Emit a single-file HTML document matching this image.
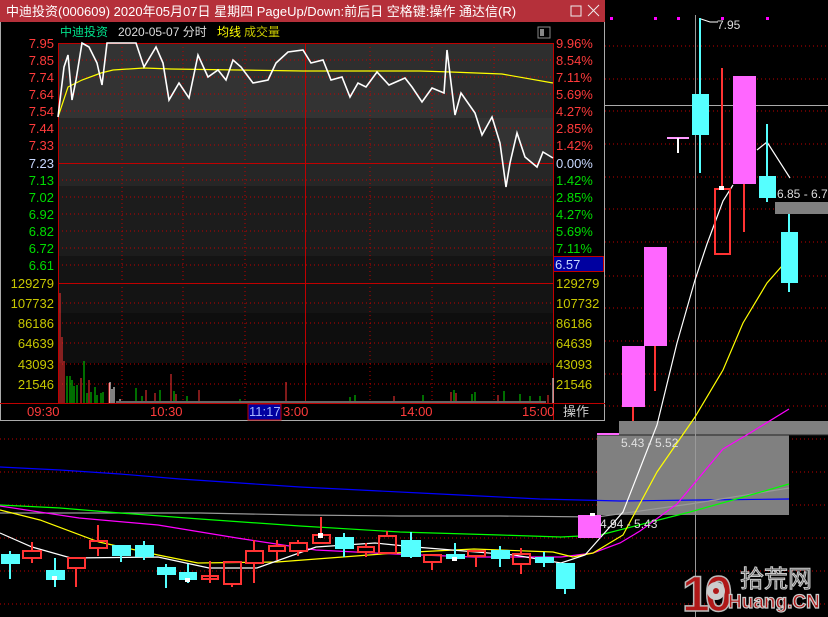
<!DOCTYPE html>
<html><head><meta charset="utf-8"><style>
html,body{margin:0;padding:0;background:#000;width:828px;height:617px;overflow:hidden}
svg{display:block}
text{font-family:"Liberation Sans","Noto Sans CJK SC",sans-serif}
</style></head><body>
<svg width="828" height="617" viewBox="0 0 828 617" xmlns="http://www.w3.org/2000/svg">
<rect width="828" height="617" fill="#000"/>
<g stroke="#c00000" stroke-width="1" stroke-dasharray="1,3">
<line x1="605" y1="46" x2="828" y2="46"/><line x1="605" y1="79" x2="828" y2="79"/><line x1="605" y1="111" x2="828" y2="111"/>
<line x1="605" y1="144" x2="828" y2="144"/><line x1="605" y1="177" x2="828" y2="177"/><line x1="605" y1="209" x2="828" y2="209"/>
<line x1="605" y1="242" x2="828" y2="242"/><line x1="605" y1="276" x2="828" y2="276"/><line x1="605" y1="308" x2="828" y2="308"/>
<line x1="605" y1="341" x2="828" y2="341"/><line x1="605" y1="374" x2="828" y2="374"/><line x1="605" y1="406" x2="828" y2="406"/>
<line x1="0" y1="439" x2="828" y2="439"/><line x1="0" y1="472" x2="828" y2="472"/><line x1="0" y1="505" x2="828" y2="505"/>
<line x1="0" y1="538" x2="828" y2="538"/><line x1="0" y1="571" x2="828" y2="571"/><line x1="0" y1="604" x2="828" y2="604"/>
</g>
<g fill="#ff00ff"><rect x="610" y="17" width="3" height="3"/><rect x="654" y="17" width="3" height="3"/><rect x="677" y="17" width="3" height="3"/><rect x="721" y="17" width="3" height="3"/><rect x="766" y="17" width="3" height="3"/></g>
<rect x="619" y="421" width="209" height="14" fill="#808080"/>
<rect x="597" y="435" width="192" height="80" fill="#808080"/>
<line x1="597" y1="435" x2="828" y2="435" stroke="#222" stroke-width="1"/>
<rect x="775" y="202" width="53" height="12" fill="#808080"/>
<rect x="597" y="433" width="22" height="2" fill="#ff66ff"/>
<line x1="695.5" y1="15" x2="695.5" y2="617" stroke="#999"/>
<line x1="605" y1="105.5" x2="828" y2="105.5" stroke="#aaa"/>
<g fill="none" stroke-width="1.2">
<polyline stroke="#0000ff" points="0,467 60,470 120,474 180,479 240,483 300,487 360,490 420,493 480,496 540,499 620,501 700,500 789,499"/>
<polyline stroke="#999" points="0,513 100,513 200,513 300,515 400,516 500,516 597,517 690,504 789,488"/>
<polyline stroke="#00ff00" points="0,505 60,508 120,513 200,519 300,526 400,532 500,535 561,537 600,535 690,512 740,498 789,484"/>
<polyline stroke="#ff00ff" points="0,506 79,518 158,525 237,538 316,550 395,554 474,557 561,557 593,553 620,543 640,531 677,504 723,449 750,433 789,409"/>
<polyline stroke="#ffff00" points="0,510 40,520 99,542 158,555 198,563 277,562 395,553 474,549 553,552 573,557 593,553 623,535 657,472 695,417 723,370 743,323 767,283 789,258"/>
<polyline stroke="#fff" points="0,533 32,547 71,558 158,557 209,568 257,568 316,547 375,543 415,547 514,555 561,563 585,555 623,512 657,425 677,343 695,280 707,244 723,201 733,185"/>
<polyline stroke="#fff" points="757,150 767,142 790,178"/>
</g>
<g stroke-width="2">
<g stroke="#55ffff" fill="#55ffff">
<line x1="10" y1="551" x2="10" y2="579"/><rect x="2" y="555" width="17" height="8"/>
<line x1="55" y1="558" x2="55" y2="587"/><rect x="47" y="571" width="17" height="8"/>
<line x1="121" y1="546" x2="121" y2="562"/><rect x="113" y="546" width="17" height="9"/>
<line x1="144" y1="541" x2="144" y2="560"/><rect x="136" y="546" width="17" height="10"/>
<line x1="166" y1="564" x2="166" y2="588"/><rect x="158" y="568" width="17" height="6"/>
<line x1="188" y1="564" x2="188" y2="583"/><rect x="180" y="573" width="16" height="6"/>
<line x1="344" y1="533" x2="344" y2="557"/><rect x="336" y="538" width="17" height="10"/>
<line x1="411" y1="532" x2="411" y2="558"/><rect x="402" y="541" width="18" height="15"/>
<line x1="455" y1="543" x2="455" y2="561"/><rect x="447" y="555" width="17" height="3"/>
<line x1="500" y1="546" x2="500" y2="567"/><rect x="492" y="551" width="17" height="7"/>
<line x1="544" y1="552" x2="544" y2="567"/><rect x="536" y="558" width="17" height="4"/>
<line x1="565" y1="564" x2="565" y2="594"/><rect x="557" y="564" width="17" height="24"/>
</g>
<g stroke="#ff3333" fill="none">
<line x1="32" y1="542" x2="32" y2="551"/><line x1="32" y1="558" x2="32" y2="563"/><rect x="23" y="551" width="18" height="7"/>
<line x1="76" y1="568" x2="76" y2="587"/><rect x="68" y="558" width="17" height="10"/>
<line x1="98" y1="525" x2="98" y2="541"/><line x1="98" y1="548" x2="98" y2="556"/><rect x="90" y="541" width="17" height="7"/>
<line x1="210" y1="561" x2="210" y2="583"/><rect x="202" y="576" width="16" height="3"/>
<line x1="232" y1="584" x2="232" y2="587"/><rect x="224" y="562" width="17" height="22"/>
<line x1="254" y1="540" x2="254" y2="583"/><rect x="246" y="551" width="17" height="12" fill="#000"/>
<line x1="277" y1="540" x2="277" y2="560"/><rect x="269" y="546" width="16" height="5" fill="#000"/>
<line x1="298" y1="540" x2="298" y2="556"/><rect x="290" y="543" width="17" height="8" fill="#000"/>
<line x1="321" y1="517" x2="321" y2="535"/><rect x="313" y="535" width="17" height="8"/>
<line x1="366" y1="543" x2="366" y2="557"/><rect x="358" y="547" width="16" height="5" fill="#000"/>
<line x1="387" y1="531" x2="387" y2="536"/><rect x="379" y="536" width="17" height="17"/>
<line x1="432" y1="562" x2="432" y2="570"/><rect x="424" y="555" width="17" height="7"/>
<line x1="476" y1="556" x2="476" y2="567"/><rect x="468" y="551" width="17" height="5"/>
<line x1="521" y1="548" x2="521" y2="554"/><line x1="521" y1="564" x2="521" y2="574"/><rect x="513" y="554" width="17" height="10"/>
</g>
</g>
<g fill="#fff"><rect x="52" y="576" width="5" height="4"/><rect x="185" y="578" width="5" height="4"/><rect x="318" y="533" width="5" height="5"/><rect x="452" y="557" width="5" height="4"/></g>
<rect x="578" y="515" width="23" height="23" fill="#ff66ff"/><rect x="590" y="513" width="5" height="3" fill="#fff"/>
<rect x="622" y="346" width="23" height="61" fill="#ff66ff"/><line x1="633" y1="407" x2="633" y2="421" stroke="#ff3333" stroke-width="2"/>
<rect x="644" y="247" width="23" height="99" fill="#ff66ff"/><line x1="655" y1="346" x2="655" y2="391" stroke="#ff3333" stroke-width="2"/>
<line x1="667" y1="138" x2="689" y2="138" stroke="#ff99ff" stroke-width="2"/><line x1="678" y1="138" x2="678" y2="153" stroke="#fff" stroke-width="2"/>
<line x1="700" y1="18" x2="700" y2="173" stroke="#55ffff" stroke-width="2"/><rect x="692" y="94" width="17" height="41" fill="#55ffff"/>
<line x1="722" y1="68" x2="722" y2="189" stroke="#ff3333" stroke-width="2"/><rect x="715" y="189" width="15" height="65" fill="none" stroke="#ff3333" stroke-width="2"/><rect x="719" y="186" width="5" height="4" fill="#fff"/>
<rect x="733" y="76" width="23" height="108" fill="#ff66ff"/><line x1="744" y1="184" x2="744" y2="232" stroke="#ff3333" stroke-width="2"/>
<line x1="767" y1="124" x2="767" y2="202" stroke="#55ffff" stroke-width="2"/><rect x="759" y="176" width="17" height="22" fill="#55ffff"/>
<line x1="789" y1="214" x2="789" y2="292" stroke="#55ffff" stroke-width="2"/><rect x="781" y="232" width="17" height="51" fill="#55ffff"/>
<polyline points="701,19 710,22 718,22" fill="none" stroke="#fff"/>
<g font-size="12" fill="#ddd">
<text x="717" y="29">7.95</text>
<text x="777" y="198">6.85 - 6.7</text>
<text x="621" y="447" fill="#e0e0e0">5.43 - 5.52</text>
<text x="600" y="528" fill="#e0e0e0">4.94 - 5.43</text>
</g>
<!-- watermark -->
<text x="682" y="611" font-size="50" font-weight="bold" fill="#b01818" stroke="#bbb" stroke-width="1.5" letter-spacing="-5">10</text>
<circle cx="716" cy="591" r="9" fill="#ccc"/><circle cx="716" cy="591" r="3" fill="#b01818"/>
<text x="740" y="587" font-size="24" fill="#555" stroke="#ccc" stroke-width="1">拾荒网</text>
<text x="728" y="608" font-size="19" font-weight="bold" fill="#b01818" stroke="#ccc" stroke-width="1.2">Huang.CN</text>
<!-- popup -->
<rect x="0" y="0" width="605" height="421" fill="#000"/>
<rect x="0.5" y="0.5" width="604" height="420" fill="none" stroke="#aaa"/>
<rect x="0" y="0" width="605" height="22" fill="#b5303a"/>
<text x="6" y="16" font-size="13" fill="#fff">中迪投资(000609) 2020年05月07日 星期四 PageUp/Down:前后日 空格键:操作 通达信(R)</text>
<rect x="571" y="6" width="10" height="10" fill="none" stroke="#eee"/>
<path d="M588 5 L599 16 M599 5 L588 16" stroke="#eee"/>
<text x="60" y="36" font-size="12" fill="#00e08a">中迪投资</text>
<text x="118" y="36" font-size="12" fill="#ddd">2020-05-07 分时</text>
<text x="217" y="36" font-size="12" fill="#ffff00">均线</text>
<text x="244" y="36" font-size="12" fill="#c8c800">成交量</text>
<rect x="538" y="27" width="12" height="11" fill="none" stroke="#888"/><rect x="540" y="29" width="4" height="7" fill="#888"/>
<rect x="58" y="43" width="495" height="75" fill="#2e2e2e"/>
<rect x="58" y="118" width="495" height="68" fill="#262626"/>
<rect x="58" y="186" width="495" height="70" fill="#1c1c1c"/>
<rect x="58" y="256" width="495" height="27" fill="#141414"/>
<rect x="58" y="283" width="495" height="30" fill="#141414"/>
<rect x="58" y="313" width="495" height="50" fill="#0e0e0e"/>
<path d="M58,117 64,67 68,55 72,100 76,80 82,43 89,47 97,63 102,85 107,43 136,43 144,67 156,47 163,63 169,100 179,83 189,98 198,55 208,77 218,70 226,80 233,60 241,67 253,83 268,80 276,63 288,52 303,50 311,63 323,60 331,80 342,77 350,97 358,83 366,87 377,72 389,85 405,78 412,87 422,102 432,88 444,93 447,50 455,115 461,93 475,113 482,135 492,117 500,143 506,187 510,163 517,133 525,157 537,167 543,152 553,158 L553,118 L58,118Z" fill="#333"/>
<g stroke="#c00000" stroke-dasharray="1,3">
<line x1="58" y1="60" x2="553" y2="60"/><line x1="58" y1="77" x2="553" y2="77"/><line x1="58" y1="94" x2="553" y2="94"/><line x1="58" y1="111" x2="553" y2="111"/><line x1="58" y1="128" x2="553" y2="128"/><line x1="58" y1="145" x2="553" y2="145"/>
<line x1="58" y1="180" x2="553" y2="180"/><line x1="58" y1="197" x2="553" y2="197"/><line x1="58" y1="214" x2="553" y2="214"/><line x1="58" y1="231" x2="553" y2="231"/><line x1="58" y1="248" x2="553" y2="248"/><line x1="58" y1="265" x2="553" y2="265"/>
<line x1="58" y1="303" x2="553" y2="303"/><line x1="58" y1="323" x2="553" y2="323"/><line x1="58" y1="343" x2="553" y2="343"/><line x1="58" y1="364" x2="553" y2="364"/><line x1="58" y1="384" x2="553" y2="384"/>
<line x1="122" y1="43" x2="122" y2="403"/><line x1="183" y1="43" x2="183" y2="403"/><line x1="245" y1="43" x2="245" y2="403"/><line x1="370" y1="43" x2="370" y2="403"/><line x1="432" y1="43" x2="432" y2="403"/><line x1="494" y1="43" x2="494" y2="403"/>
</g>
<g stroke="#c00000" fill="none">
<rect x="58.5" y="43.5" width="495" height="360"/>
<line x1="58" y1="163.5" x2="553" y2="163.5"/><line x1="58" y1="283.5" x2="553" y2="283.5"/><line x1="305.5" y1="43" x2="305.5" y2="403"/>
<line x1="553.5" y1="403" x2="553.5" y2="420"/>
</g>
<polyline fill="none" stroke="#ffff00" stroke-width="1.2" points="58,117 68,87 82,80 101,73 113,70 144,68 171,69 303,71 420,71 451,72 502,74 553,83"/>
<polyline fill="none" stroke="#fff" stroke-width="1.6" points="58,117 64,67 68,55 72,100 76,80 82,43 89,47 97,63 102,85 107,43 136,43 144,67 156,47 163,63 169,100 179,83 189,98 198,55 208,77 218,70 226,80 233,60 241,67 253,83 268,80 276,63 288,52 303,50 311,63 323,60 331,80 342,77 350,97 358,83 366,87 377,72 389,85 405,78 412,87 422,102 432,88 444,93 447,50 455,115 461,93 475,113 482,135 492,117 500,143 506,187 510,163 517,133 525,157 537,167 543,152 553,158"/>
<g stroke-width="1">
<g stroke="#ff3333"><line x1="60" y1="293" x2="60" y2="403"/><line x1="62" y1="337" x2="62" y2="403"/><line x1="64" y1="361" x2="64" y2="403"/><line x1="81" y1="378" x2="81" y2="403"/><line x1="89" y1="380" x2="89" y2="403"/><line x1="109" y1="383" x2="109" y2="403"/><line x1="171" y1="374" x2="171" y2="403"/><line x1="146" y1="390" x2="146" y2="403"/><line x1="155" y1="393" x2="155" y2="403"/><line x1="199" y1="390" x2="199" y2="403"/><line x1="286" y1="382" x2="286" y2="403"/><line x1="451" y1="392" x2="451" y2="403"/><line x1="456" y1="393" x2="456" y2="403"/><line x1="498" y1="395" x2="498" y2="403"/><line x1="548" y1="395" x2="548" y2="403"/><line x1="394" y1="396" x2="394" y2="403"/><line x1="176" y1="394" x2="176" y2="403"/></g>
<g stroke="#00dd00"><line x1="67" y1="376" x2="67" y2="403"/><line x1="70" y1="376" x2="70" y2="403"/><line x1="72" y1="380" x2="72" y2="403"/><line x1="74" y1="386" x2="74" y2="403"/><line x1="77" y1="385" x2="77" y2="403"/><line x1="84" y1="361" x2="84" y2="403"/><line x1="87" y1="393" x2="87" y2="403"/><line x1="91" y1="392" x2="91" y2="403"/><line x1="95" y1="387" x2="95" y2="403"/><line x1="97" y1="395" x2="97" y2="403"/><line x1="101" y1="393" x2="101" y2="403"/><line x1="103" y1="392" x2="103" y2="403"/><line x1="136" y1="388" x2="136" y2="403"/><line x1="142" y1="396" x2="142" y2="403"/><line x1="160" y1="390" x2="160" y2="403"/><line x1="174" y1="391" x2="174" y2="403"/><line x1="187" y1="396" x2="187" y2="403"/><line x1="240" y1="399" x2="240" y2="403"/><line x1="350" y1="397" x2="350" y2="403"/><line x1="355" y1="395" x2="355" y2="403"/><line x1="423" y1="395" x2="423" y2="403"/><line x1="454" y1="390" x2="454" y2="403"/><line x1="472" y1="394" x2="472" y2="403"/><line x1="475" y1="392" x2="475" y2="403"/><line x1="504" y1="391" x2="504" y2="403"/><line x1="520" y1="394" x2="520" y2="403"/><line x1="530" y1="396" x2="530" y2="403"/><line x1="540" y1="396" x2="540" y2="403"/></g>
<g stroke="#fff"><line x1="110" y1="382" x2="110" y2="403"/><line x1="112" y1="389" x2="112" y2="403"/><line x1="114" y1="387" x2="114" y2="403"/><line x1="120" y1="399" x2="120" y2="403"/><line x1="553" y1="378" x2="553" y2="403"/></g>
<rect x="116" y="401" width="430" height="2" fill="#666"/>
</g>
<line x1="0" y1="403.5" x2="605" y2="403.5" stroke="#c00000"/>
<rect x="248" y="404" width="33" height="16" fill="#0000a0" stroke="#c00000"/>
<rect x="553.5" y="256.5" width="50" height="15" fill="#0000a0" stroke="#c00000"/>
<g font-size="13">
<g fill="#ff3b3b" text-anchor="end"><text x="54" y="48">7.95</text><text x="54" y="65">7.85</text><text x="54" y="82">7.74</text><text x="54" y="99">7.64</text><text x="54" y="116">7.54</text><text x="54" y="133">7.44</text><text x="54" y="150">7.33</text></g>
<text x="54" y="168" fill="#c8d8ff" text-anchor="end">7.23</text>
<g fill="#00dd00" text-anchor="end"><text x="54" y="185">7.13</text><text x="54" y="202">7.02</text><text x="54" y="219">6.92</text><text x="54" y="236">6.82</text><text x="54" y="253">6.72</text><text x="54" y="270">6.61</text></g>
<g fill="#c8c800" text-anchor="end"><text x="54" y="288">129279</text><text x="54" y="308">107732</text><text x="54" y="328">86186</text><text x="54" y="348">64639</text><text x="54" y="369">43093</text><text x="54" y="389">21546</text></g>
<g fill="#ff3b3b"><text x="556" y="48">9.96%</text><text x="556" y="65">8.54%</text><text x="556" y="82">7.11%</text><text x="556" y="99">5.69%</text><text x="556" y="116">4.27%</text><text x="556" y="133">2.85%</text><text x="556" y="150">1.42%</text></g>
<text x="556" y="168" fill="#c8d8ff">0.00%</text>
<g fill="#00dd00"><text x="556" y="185">1.42%</text><text x="556" y="202">2.85%</text><text x="556" y="219">4.27%</text><text x="556" y="236">5.69%</text><text x="556" y="253">7.11%</text></g>
<text x="555" y="269" fill="#c8d8ff">6.57</text>
<g fill="#c8c800"><text x="556" y="288">129279</text><text x="556" y="308">107732</text><text x="556" y="328">86186</text><text x="556" y="348">64639</text><text x="556" y="369">43093</text><text x="556" y="389">21546</text></g>
<g fill="#ff3b3b"><text x="27" y="416">09:30</text><text x="150" y="416">10:30</text><text x="283" y="416">3:00</text><text x="400" y="416">14:00</text><text x="522" y="416">15:00</text></g>
<text x="249" y="416" fill="#a8b8ff">11:17</text>
<text x="563" y="416" fill="#ccc">操作</text>
</g>
</svg>
</body></html>
